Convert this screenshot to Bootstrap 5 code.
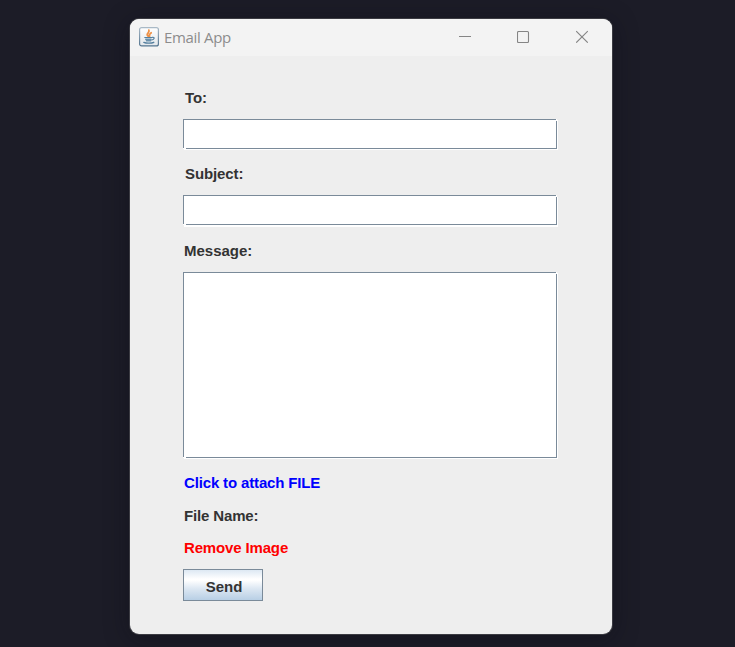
<!DOCTYPE html>
<html lang="en">
<head>
<meta charset="utf-8">
<meta name="viewport" content="width=device-width, initial-scale=1">
<title>Email App</title>
<link href="https://cdn.jsdelivr.net/npm/bootstrap@5.3.0/dist/css/bootstrap.min.css" rel="stylesheet">
<style>
body { background: #1c1c27; height: 647px; font-family: "Liberation Sans", Arial, sans-serif; }
.app-window { width: 482px; height: 615px; margin: 19px 0 0 130px; background: #eee; border-radius: 9px; box-shadow: 0 0 0 1px #3b3b42, 0 4px 26px rgba(10,10,20,.4); }
.title-bar { height: 37px; background: #f3f3f3; padding: 0 0 2px 9px; }
.title-text { font: 15px/20px "Open Sans", "Noto Sans", sans-serif; letter-spacing: -.34px; color: #8c8c8c; margin-left: 5px; width: 67px; white-space: nowrap; }
.win-btn { width: 59px; height: 35px; padding: 0; }
.win-btn:first-child { width: 57px; }
.mail-form { width: 374px; margin: 30px 0 0 53px; font-size: 15px; font-weight: 700; color: #333; }
.form-label, .mail-link { display: block; font-size: 15px; line-height: 24px; height: 24px; margin: 0; padding-left: 1px; white-space: nowrap; }
.mail-link { letter-spacing: -.15px; }
.form-label.nudge { padding-left: 2px; letter-spacing: -.1px; }
.swing-field.form-control {
  --edge: linear-gradient(#7a8a99, #7a8a99);
  height: 30px; margin: 9px 0 13px; padding: 5px; border: 0; border-radius: 0; resize: none; box-shadow: 1px 1px 0 #fff;
  background: var(--edge) 0 0 / calc(100% - 1px) 1px no-repeat, var(--edge) 0 0 / 1px calc(100% - 1px) no-repeat,
    var(--edge) 3px 100% / calc(100% - 3px) 1px no-repeat, var(--edge) 100% 2px / 1px calc(100% - 2px) no-repeat, #fff;
}
.swing-field.form-control.subject-field { margin-bottom: 14px; box-shadow: 1px 2px 0 #fff; }
textarea.swing-field.form-control { height: 186px; }
.mail-link.attach { color: #00f; margin-bottom: 9px; }
.mail-link.remove { color: #f00; margin: 8px 0 9px; }
.send-btn.btn { display: block; width: 80px; height: 32px; padding: 3px 0 0 2px; border: 1px solid #7a8a99; border-radius: 0; font-size: 15px; font-weight: 700; line-height: 28px; color: #333; background: linear-gradient(#dde8f3 0, #fff 30%, #fff 34%, #dce7f2 62%, #b8cfe5 100%); }
</style>
</head>
<body>
<main class="app-window overflow-hidden">
  <header class="title-bar d-flex align-items-center">
    <svg width="20" height="20" viewBox="0 0 20 20" aria-hidden="true">
      <defs><linearGradient id="tile" x2="0" y2="1"><stop stop-color="#fff"/><stop offset="1" stop-color="#e2e7eb"/></linearGradient>
      <linearGradient id="edge" x2="0" y2="1"><stop stop-color="#a9b9c6"/><stop offset="1" stop-color="#547590"/></linearGradient></defs>
      <rect x=".6" y=".6" width="18.8" height="18.3" rx="2" fill="url(#tile)" stroke="url(#edge)" stroke-width="1.2"/>
      <g fill="none" stroke-linecap="round">
        <path d="M9.2 9.3C6.2 7.2 11 5.8 9.9 3.2M10.6 9.2C9.7 7.6 11 6.8 12.2 5.8" stroke="#ee9146" stroke-width="1.8"/>
        <path d="M5.8 10.5h7.4M13.4 10.3c2.7-.3 2 2.3-.6 2.7" stroke="#547f9e" stroke-width="1.2"/>
        <path d="M6.7 12.2h5.4M7.4 13.7h4.3" stroke="#6b91ac" stroke-width="1.4"/>
        <path d="M4.8 15.4c2.5 1.1 7.7 1.1 10-.1" stroke="#547f9e" stroke-width="1.3"/>
      </g>
    </svg>
    <span class="title-text">Email App</span>
    <div class="d-flex ms-auto">
      <button class="win-btn btn border-0" aria-label="Minimize"><svg class="d-block mx-auto" width="13" height="13" viewBox="0 0 13 13"><path d="M0 6.5h12" stroke="#858585"/></svg></button>
      <button class="win-btn btn border-0" aria-label="Maximize"><svg class="d-block mx-auto" width="13" height="13" viewBox="0 0 13 13"><rect x=".5" y="1.5" width="11" height="11" rx="1" fill="none" stroke="#858585" stroke-width="1.1"/></svg></button>
      <button class="win-btn btn border-0" aria-label="Close"><svg class="d-block mx-auto" width="13" height="13" viewBox="0 0 13 13"><path d="M.2 1.1l11.6 11.6M11.8 1.1L.2 12.7" stroke="#858585" stroke-width="1.1"/></svg></button>
    </div>
  </header>
  <form class="mail-form">
    <label class="form-label nudge" for="to">To:</label>
    <input class="form-control swing-field" id="to" type="text">
    <label class="form-label nudge" for="subject">Subject:</label>
    <input class="form-control swing-field subject-field" id="subject" type="text">
    <label class="form-label" for="message">Message:</label>
    <textarea class="form-control swing-field d-block" id="message"></textarea>
    <a class="mail-link attach text-decoration-none">Click to attach FILE</a>
    <span class="mail-link">File Name:</span>
    <a class="mail-link remove text-decoration-none">Remove Image</a>
    <button class="btn send-btn" type="button">Send</button>
  </form>
</main>
<script src="https://cdn.jsdelivr.net/npm/bootstrap@5.3.0/dist/js/bootstrap.bundle.min.js"></script>
</body>
</html>
